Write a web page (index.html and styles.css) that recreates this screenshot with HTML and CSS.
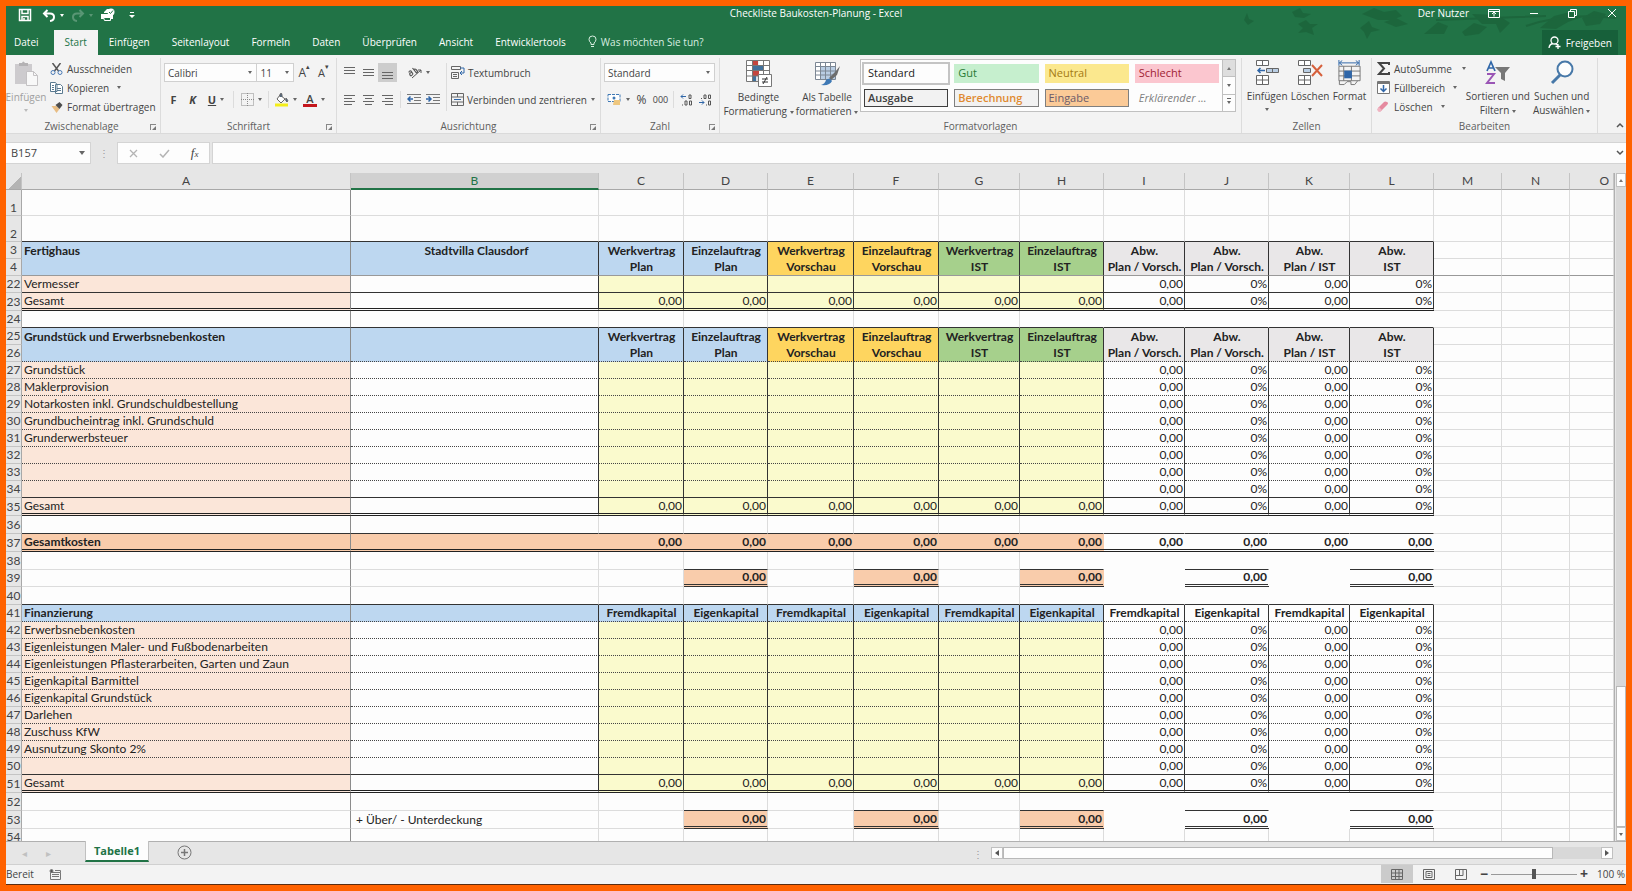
FILE: index.html
```html
<!DOCTYPE html>
<html lang="de">
  <head>
    <meta charset="UTF-8">
    <meta name="viewport" content="width=device-width, initial-scale=1.0">
    <title>Checkliste Baukosten-Planung - Excel</title>
    <link rel="stylesheet" href="styles.css">
  </head>
  <body>
    <header class="top">
      <!-- Leaf pattern behind the window buttons -->
      <svg class="leaves" width="400" height="49" viewBox="0 0 400 49" fill="#1a5e37">
        <path d="M18 14l3-7 2 6 5 2-6 4zM66 6l8-4 3 5 8 1-7 4-9-1zM72 18l8-4 4 4 8 0-6 4 2 7-8-3-8 1 5-5zM136 8l12-6 10 4 12-2 6 6-10 4-14 0zM134 22l9-7 3 6 8 3-9 2-4 7-3-7zM158 16l12-4 12 6-12 3zM198 28l14-12 10 4-4 8zM236 26l12-9 13 4-8 7-14 2zM246 8l10 10 14 0 4 9 10-10-12-8zM314 22l14-12 16-4 12 5-14 5-12 7zM356 12l12-7 12 3-6 10-14 2z"/>
        <path d="M210 14q60-2 110-4M300 20q40-14 90-8" stroke="#1a5e37" stroke-width="2" fill="none"/>
      </svg>
      <div class="titlebar">
        <div class="quick">
          <button type="button" aria-label="Speichern"><svg width="14" height="14" viewBox="0 0 14 14" fill="none" stroke="#fff" stroke-width="1.5"><path d="M1.5 1.5h11v11h-11zM4 1.5v4h6v-4M4 12.5v-4h6v4M6 10v2"/></svg></button>
          <button type="button" aria-label="Rückgängig"><svg width="14" height="13" viewBox="0 0 14 13" fill="none" stroke="#fff" stroke-width="2"><path d="M5.500 1L2 4.500 5.500 8M2 4.500h6q4 0 4 3.500t-4 4"/></svg><i class="caret light"></i></button>
          <button type="button" class="faded" aria-label="Wiederholen"><svg width="14" height="13" viewBox="0 0 14 13" fill="none" stroke="#fff" stroke-width="2"><path d="M8.500 1L12 4.500 8.500 8M12 4.500H6q-4 0-4 3.500t4 4"/></svg><i class="caret light"></i></button>
          <button type="button" aria-label="Schnelldruck"><svg width="15" height="14" viewBox="0 0 15 14"><path d="M4 4l3-3h3v4H4zM1 6h12v5H1z" fill="#fff"/><path d="M3.500 9.500h7v3h-6z" fill="#217346" stroke="#fff"/><circle cx="11" cy="4" r="3.500" fill="#fff"/><path d="M9 4l1.500 1.500L13 2.500" stroke="#217346" fill="none"/></svg></button>
          <button type="button" aria-label="Symbolleiste anpassen"><svg width="6" height="8" viewBox="0 0 6 8" fill="#fff"><path d="M1 1h4v1H1zM0 4h6L3 7z"/></svg></button>
        </div>
        <div class="doc-title">Checkliste Baukosten-Planung - Excel</div>
        <div class="window-buttons">
          <span class="user">Der Nutzer</span>
          <button type="button" aria-label="Menüband-Anzeige"><svg width="12" height="9" viewBox="0 0 12 9" fill="none" stroke="#fff"><path d="M.5.5h11v8H.5zM.5 2.500h11M6 7.500v-4M4 5l2-2 2 2"/></svg></button>
          <button type="button" aria-label="Minimieren"><svg width="10" height="9" viewBox="0 0 10 9" stroke="#fff"><path d="M1 4.500h8"/></svg></button>
          <button type="button" aria-label="Verkleinern"><svg width="10" height="9" viewBox="0 0 10 9" fill="none" stroke="#fff"><path d="M.5 2.500h6v6h-6zM2.500 2.500v-2h6v6h-2"/></svg></button>
          <button type="button" aria-label="Schließen"><svg width="10" height="10" viewBox="0 0 10 10" stroke="#fff"><path d="M1 1l8 8M9 1L1 9"/></svg></button>
        </div>
      </div>
      <nav class="tabs">
        <button type="button" class="file">Datei</button>
        <button type="button" class="active">Start</button>
        <button type="button">Einfügen</button>
        <button type="button">Seitenlayout</button>
        <button type="button">Formeln</button>
        <button type="button">Daten</button>
        <button type="button">Überprüfen</button>
        <button type="button">Ansicht</button>
        <button type="button">Entwicklertools</button>
        <button type="button" class="tell-me"><svg width="9" height="13" viewBox="0 0 9 13" fill="none" stroke="#d8eee0"><path d="M3 9.500V8Q1 6.500 1 4.200 1 1 4.500 1T8 4.200Q8 6.500 6 8v1.500zM3 11.500h3"/></svg>Was möchten Sie tun?</button>
        <button type="button" class="share"><svg width="14" height="13" viewBox="0 0 14 13" fill="none" stroke="#fff" stroke-width="1.300"><circle cx="6.500" cy="4.500" r="3.500"/><path d="M1 12q.5-4 4-4.500M7.500 7.500l2 1.500M7.500 10.500h5M10 8v5"/></svg>Freigeben</button>
      </nav>
    </header>

    <section class="ribbon">
      <div class="group clipboard">
        <div class="body">
          <button type="button" class="big paste"><svg width="26" height="27" viewBox="0 0 26 27"><path d="M2 4h17v20H2z" fill="#cdcbce"/><path d="M6 6V3h3q1-3 3 0h3v3z" fill="#b4b2b4"/><path d="M13.500 11.500h7l4 4v10h-11z" fill="#f8f8f8" stroke="#c4c2c4"/><path d="M20.500 11.500v4h4" fill="none" stroke="#c4c2c4"/></svg><span>Einfügen</span><i class="caret"></i></button>
          <div class="stack">
            <button type="button"><svg width="12" height="12" viewBox="0 0 12 12" fill="none"><path d="M2 0l6 8M10 0L4 8" stroke="#555" stroke-width="1.500"/><circle cx="2.500" cy="9.500" r="2" stroke="#4a7ab5"/><circle cx="9.500" cy="9.500" r="2" stroke="#4a7ab5"/></svg>Ausschneiden</button>
            <button type="button"><svg width="13" height="12" viewBox="0 0 13 12" fill="#fff" stroke="#5a7a90"><path d="M.5.5h5l1.500 2v7H.5zM5.500 2.500h5l2 2v7h-7z"/><path d="M2 3.500h2M2 5.500h2M2 7.500h2M7 6.500h4M7 8.500h4"/></svg>Kopieren<i class="caret"></i></button>
            <button type="button"><svg width="12" height="12" viewBox="0 0 12 12"><path d="M1 5l5 0 3 3-3 4z" fill="#e8bd84"/><path d="M5 4l4-3 3 3-3 4z" fill="#4c4c4c"/></svg>Format übertragen</button>
          </div>
        </div>
        <div class="caption">Zwischenablage<i class="launcher"></i></div>
      </div>

      <div class="group font">
        <div class="body rows">
          <div class="row">
            <select class="font-name" aria-label="Schriftart"><option>Calibri</option></select><select class="font-size" aria-label="Schriftgrad"><option>11</option></select>
            <button type="button" class="tool grow" aria-label="Vergrößern">A<sup>▴</sup></button>
            <button type="button" class="tool shrink" aria-label="Verkleinern">A<sup>▾</sup></button>
          </div>
          <div class="row">
            <button type="button" class="tool"><b>F</b></button>
            <button type="button" class="tool"><b><em>K</em></b></button>
            <button type="button" class="tool with-caret"><b><u>U</u></b><i class="caret"></i></button>
            <i class="split"></i>
            <button type="button" class="tool with-caret" aria-label="Rahmen"><svg width="13" height="13" viewBox="0 0 13 13" fill="none" stroke="#8a8a8a" stroke-dasharray="1 1"><path d="M.5.5h12v12H.5zM6.500 0v13M0 6.500h13"/></svg><i class="caret"></i></button>
            <i class="split"></i>
            <button type="button" class="tool with-caret" aria-label="Füllfarbe"><svg width="14" height="14" viewBox="0 0 14 14"><path d="M5 2l5 4-4 4-4-4z" fill="#fff" stroke="#666"/><path d="M5 4V1q2-2 2 1v2M11 5q3 3 1 4-2-1-1-4" fill="#4a6a8a" stroke="#666"/><path d="M0 10.500h13v3H0z" fill="#f4ee1a"/></svg><i class="caret"></i></button>
            <button type="button" class="tool with-caret font-color" aria-label="Schriftfarbe"><span>A</span><i class="caret"></i></button>
          </div>
        </div>
        <div class="caption">Schriftart<i class="launcher"></i></div>
      </div>

      <div class="group align">
        <div class="body">
          <div class="rows">
            <div class="row">
              <button type="button" class="tool" aria-label="Oben"><svg width="13" height="12" viewBox="0 0 13 12" stroke="#666"><path d="M1 .5h11M1 3.500h11M1 6.500h11"/></svg></button>
              <button type="button" class="tool" aria-label="Mitte"><svg width="13" height="12" viewBox="0 0 13 12" stroke="#666"><path d="M1 2.500h11M1 5.500h11M1 8.500h11"/></svg></button>
              <button type="button" class="tool pressed" aria-label="Unten"><svg width="13" height="12" viewBox="0 0 13 12" stroke="#666"><path d="M1 5.500h11M1 8.500h11M1 11.500h11"/></svg></button>
              <button type="button" class="tool with-caret rotate" aria-label="Ausrichtung"><svg width="14" height="12" viewBox="0 0 14 12" fill="none" stroke="#555"><path d="M4 11l9-8M10 3h3v3"/><path d="M1 5.500q0-2 2-1.500l2 3M3.500 5.500Q1 6 2 8t3-1M4.500 1l4 5q2-1 0-3t-2.500 0" stroke-width="1.200"/></svg><i class="caret"></i></button>
            </div>
            <div class="row">
              <button type="button" class="tool" aria-label="Linksbündig"><svg width="13" height="10" viewBox="0 0 13 10" stroke="#666"><path d="M1 .5h11M1 3.500h8M1 6.500h11M1 9.500h8"/></svg></button>
              <button type="button" class="tool" aria-label="Zentriert"><svg width="13" height="10" viewBox="0 0 13 10" stroke="#666"><path d="M1 .5h11M3 3.500h7M1 6.500h11M3 9.500h7"/></svg></button>
              <button type="button" class="tool" aria-label="Rechtsbündig"><svg width="13" height="10" viewBox="0 0 13 10" stroke="#666"><path d="M1 .5h11M4 3.500h8M1 6.500h11M4 9.500h8"/></svg></button>
              <i class="split"></i>
              <button type="button" class="tool" aria-label="Einzug verkleinern"><svg width="14" height="11" viewBox="0 0 14 11"><path d="M0 .5h14M7 3.500h7M7 6.500h7M0 9.500h14" stroke="#777"/><path d="M6 5H2M3.500 2.500L1 5l2.500 2.500" stroke="#2f66a8" stroke-width="1.500" fill="none"/></svg></button>
              <button type="button" class="tool" aria-label="Einzug vergrößern"><svg width="14" height="11" viewBox="0 0 14 11"><path d="M0 .5h14M7 3.500h7M7 6.500h7M0 9.500h14" stroke="#777"/><path d="M0 5h4M2.500 2.500L5 5 2.500 7.500" stroke="#2f66a8" stroke-width="1.500" fill="none"/></svg></button>
            </div>
          </div>
          <i class="split tall"></i>
          <div class="rows wide">
            <div class="row"><button type="button" class="labelled"><svg width="14" height="13" viewBox="0 0 14 13" fill="none"><path d="M.5.5h9v3h-9zM.5 6.500h7v6h-7zM2 8.500h4M2 10.500h4" stroke="#666"/><path d="M9 2h4v5H9M11 5L9 7l2 2" stroke="#2f66a8"/></svg>Textumbruch</button></div>
            <div class="row"><button type="button" class="labelled merge"><svg width="13" height="13" viewBox="0 0 13 13" fill="none" stroke="#666"><path d="M.5.5h12v12H.5zM.5 4h12M.5 9h12M6.500.5V4M6.500 9v3.500"/><path d="M3 6.500h7" stroke="#2f66a8"/></svg>Verbinden und zentrieren<i class="caret"></i></button></div>
          </div>
        </div>
        <div class="caption">Ausrichtung<i class="launcher"></i></div>
      </div>

      <div class="group number">
        <div class="body rows">
          <div class="row"><select class="number-format" aria-label="Zahlenformat"><option>Standard</option></select></div>
          <div class="row">
            <button type="button" class="tool with-caret" aria-label="Buchhaltungszahlenformat"><svg width="15" height="13" viewBox="0 0 15 13"><path d="M1 1.500h12v7H1z" fill="#fff" stroke="#3f79b5" stroke-dasharray="3 1"/><circle cx="7" cy="5" r="1.500" fill="#3f79b5"/><path d="M7 7h6v5H6z" fill="#eec77f"/></svg><i class="caret"></i></button>
            <button type="button" class="tool percent">%</button>
            <button type="button" class="tool thousand">000</button>
            <i class="split"></i>
            <button type="button" class="tool decimals" aria-label="Dezimalstelle hinzufügen"><svg width="13" height="12" viewBox="0 0 13 12" fill="none"><path d="M6 2.500H1M3 .5l-2 2 2 2" stroke="#2f66a8"/><path d="M9 1h2v3.500H9zM5 7h2v4H5zM9.500 7h2v4h-2zM2 11h1" stroke="#555"/></svg></button>
            <button type="button" class="tool decimals" aria-label="Dezimalstelle löschen"><svg width="13" height="12" viewBox="0 0 13 12" fill="none"><path d="M5 1h2v3.500H5zM9.500 1h2v3.500h-2zM9.500 7h2v4h-2zM2 4.500h1M7 11h1" stroke="#555"/><path d="M0 8.500h5M3 6.500l2 2-2 2" stroke="#2f66a8"/></svg></button>
          </div>
        </div>
        <div class="caption">Zahl<i class="launcher"></i></div>
      </div>

      <div class="group styles">
        <div class="body">
          <button type="button" class="big cond"><svg width="26" height="27" viewBox="0 0 26 27"><path d="M.5.500h23v21H.5z" fill="#fff"/><path d="M6.500 1h6v20h-6z" fill="#dfe3e8"/><path d="M6 1h6v5H6z" fill="#c4453f"/><path d="M6 6h11v5H6z" fill="#41719c"/><path d="M6 11h7v5H6z" fill="#c4453f"/><path d="M6 16h4v5H6z" fill="#41719c"/><path d="M.5.500h23v21H.5zM.5 5.500h23M.5 10.500h23M.5 16h12M6.500.5v21M17.500.5v14" fill="none" stroke="#777"/><path d="M12.500 14.500h13v12h-13z" fill="#fff" stroke="#777"/><path d="M16 19h6M16 22h6M21 17l-4 7" stroke="#333" fill="none"/></svg><span>Bedingte</span><span>Formatierung <i class="caret"></i></span></button>
          <button type="button" class="big as-table"><svg width="27" height="27" viewBox="0 0 27 27"><path d="M1.500 2.500h20v17h-20z" fill="#fff"/><path d="M6 7h15v12H6z" fill="#b9cde3"/><path d="M1.500 2.500h20v17h-20zM1.500 6.500h20M1.500 11h20M1.500 15h20M6.500 2.500v17M11.500 2.500v17M16.500 2.500v17" fill="none" stroke="#7c8794"/><path d="M26 6l-3 9-6 5-2-2 6-6z" fill="#6d6d6d"/><path d="M7 25q4-1 5-5 4-3 6 1-2 5-11 4z" fill="#3f79b5"/></svg><span>Als Tabelle</span><span>formatieren <i class="caret"></i></span></button>
          <div class="gallery">
            <div class="swatches">
              <button type="button" class="standard">Standard</button>
              <button type="button" class="good">Gut</button>
              <button type="button" class="neutral">Neutral</button>
              <button type="button" class="bad">Schlecht</button>
              <button type="button" class="output">Ausgabe</button>
              <button type="button" class="calc">Berechnung</button>
              <button type="button" class="input">Eingabe</button>
              <button type="button" class="note">Erklärender ...</button>
            </div>
            <div class="gallery-scroll">
              <button type="button" class="off" aria-label="Nach oben"><i class="caret up"></i></button>
              <button type="button" aria-label="Nach unten"><i class="caret"></i></button>
              <button type="button" aria-label="Weitere"><i class="caret more"></i></button>
            </div>
          </div>
        </div>
        <div class="caption">Formatvorlagen</div>
      </div>

      <div class="group cells">
        <div class="body">
          <button type="button" class="big"><svg width="24" height="26" viewBox="0 0 24 26" fill="#fff" stroke="#666"><path d="M1.500.5h12v5h-12zM7.500.5v5M1.500 15.500h12v9h-12zM7.500 15.500v9M1.500 20h12"/><path d="M11.500 8.500h12v4h-12zM17.500 8.500v4" fill="#b9cde3"/><path d="M10 10.500H3M5.500 8L3 10.500 5.500 13" stroke="#2f66a8" stroke-width="1.500" fill="none"/></svg><span>Einfügen</span><i class="caret"></i></button>
          <button type="button" class="big"><svg width="26" height="26" viewBox="0 0 26 26" fill="#fff" stroke="#666"><path d="M1.500.5h12v5h-12zM7.500.5v5M1.500 15.500h12v9h-12zM7.500 15.500v9M1.500 20h12"/><path d="M6.500 8.500h7v4h-7z" fill="#b9cde3"/><path d="M15 5l10 11M25 5L15 16" stroke="#d6603c" stroke-width="2"/></svg><span>Löschen</span><i class="caret"></i></button>
          <button type="button" class="big"><svg width="25" height="26" viewBox="0 0 25 27" fill="none"><path d="M2 3h20M5 .5L2 3l3 2.500M19 .5L22 3l-3 2.500M1.500 0v6M22.500 0v6" stroke="#2f66a8"/><path d="M1.500 6.500h22v15h-22zM1.500 11.500h22M1.500 16.500h22M6.500 6.500v15M14.500 6.500v15M2 21.500v4h5l3-3h4v3h4l3-4" stroke="#777"/><path d="M7 11h8v8H7z" fill="#2f66a8"/></svg><span>Format</span><i class="caret"></i></button>
        </div>
        <div class="caption">Zellen</div>
      </div>

      <div class="group edit">
        <div class="body">
          <div class="stack">
            <button type="button"><svg width="13" height="13" viewBox="0 0 13 13" fill="none" stroke="#444" stroke-width="2"><path d="M12 3V1H2l5 5.500L2 12h10v-2"/></svg>AutoSumme<i class="caret far"></i></button>
            <button type="button"><svg width="13" height="13" viewBox="0 0 13 13" fill="#fff"><path d="M.5.500h12v12H.5z" stroke="#777"/><path d="M1 1h11v2H1z" fill="#777"/><path d="M6.500 4v6M3.500 7.500l3 3 3-3" fill="none" stroke="#2f66a8" stroke-width="1.500"/></svg>Füllbereich<i class="caret"></i></button>
            <button type="button"><svg width="13" height="13" viewBox="0 0 13 13"><path d="M1 8l6-6q1-1 3 0 2 1 0 3l-6 6q-1 1-3 0-1-1 0-3z" fill="#e58a9f"/><path d="M1 8q-1 2 0 3t3 0l1-1-3-3z" fill="#f0b4c2"/></svg>Löschen<i class="caret"></i></button>
          </div>
          <button type="button" class="big sort"><svg width="26" height="26" viewBox="0 0 26 26" fill="none"><path d="M2 11L6 2l4 9M3.500 8h5" stroke="#2f66a8" stroke-width="1.700"/><path d="M2 14h7L2 23h8" stroke="#9a55b5" stroke-width="2"/><path d="M10 7h15l-5 6v8l-4-2v-6z" fill="#777"/></svg><span>Sortieren und</span><span>Filtern <i class="caret"></i></span></button>
          <button type="button" class="big find"><svg width="26" height="26" viewBox="0 0 26 26" fill="none" stroke="#4778a8"><circle cx="16" cy="9" r="7.500" stroke-width="2" fill="#fdfdfd"/><path d="M11 15l-8 8" stroke-width="3"/></svg><span>Suchen und</span><span>Auswählen <i class="caret"></i></span></button>
        </div>
        <div class="caption">Bearbeiten</div>
      </div>
      <button type="button" class="collapse" aria-label="Menüband reduzieren"><svg width="8" height="6" viewBox="0 0 8 6" fill="none" stroke="#555" stroke-width="1.500"><path d="M1 5l3-3 3 3"/></svg></button>
    </section>

    <section class="formula-bar">
      <div class="name-box"><input type="text" value="B157" aria-label="Namenfeld"><i class="caret big-caret"></i></div>
      <span class="dots">⋮</span>
      <div class="fx">
        <svg width="9" height="9" viewBox="0 0 9 9" stroke="#b4b4b4" stroke-width="1.300"><path d="M1 1l7 7M8 1L1 8"/></svg>
        <svg width="11" height="9" viewBox="0 0 11 9" fill="none" stroke="#b4b4b4" stroke-width="1.500"><path d="M1 5l3 3 6-7"/></svg>
        <em>f<small>x</small></em>
      </div>
      <input type="text" class="formula" aria-label="Bearbeitungsleiste">
      <button type="button" class="expand" aria-label="Bearbeitungsleiste erweitern"><svg width="8" height="6" viewBox="0 0 8 6" fill="none" stroke="#555" stroke-width="1.500"><path d="M1 1l3 3 3-3"/></svg></button>
    </section>

    <main class="workbook">
      <div class="sheet">
        <table>
          <colgroup>
            <col class="w-head"><col class="w-a"><col class="w-b">
            <col class="w-m"><col class="w-l"><col class="w-xl"><col class="w-m"><col class="w-s"><col class="w-l">
            <col class="w-s"><col class="w-l"><col class="w-s"><col class="w-l">
            <col class="w-xs"><col class="w-xs"><col>
          </colgroup>
          <thead><tr id="letters"></tr></thead>
          <tbody id="grid"></tbody>
        </table>
      </div>
      <div class="vscroll">
        <button type="button" aria-label="Nach oben"><i class="caret up"></i></button>
        <div class="vtrack"><div class="vthumb"></div></div>
        <button type="button" aria-label="Nach unten"><i class="caret"></i></button>
      </div>
    </main>

    <div class="sheet-tabs">
      <span class="nav-arrow">◂</span><span class="nav-arrow">▸</span>
      <button type="button" class="sheet-tab">Tabelle1</button>
      <button type="button" class="add" aria-label="Neues Blatt"><svg width="15" height="15" viewBox="0 0 15 15" fill="none" stroke="#777"><circle cx="7.500" cy="7.500" r="6.500"/><path d="M7.500 4v7M4 7.500h7" stroke-width="1.500"/></svg></button>
      <div class="hscroll">
        <span class="dots">⋮</span>
        <button type="button" aria-label="Nach links"><i class="caret left"></i></button>
        <div class="htrack"><div class="hthumb"></div></div>
        <button type="button" aria-label="Nach rechts"><i class="caret right"></i></button>
      </div>
    </div>

    <footer class="status">
      <span>Bereit</span>
      <svg width="12" height="11" viewBox="0 0 12 11" fill="none" stroke="#777"><path d="M1.500 3.500h10v7h-10zM6 1.500h5.500v2M3 5.500h7M3 7.500h7"/><circle cx="2.500" cy="2" r="1.500" fill="#555"/></svg>
      <div class="views">
        <button type="button" class="on" aria-label="Normal"><svg width="12" height="11" viewBox="0 0 12 11" fill="none" stroke="#666"><path d="M.5.5h11v10H.5zM.5 4h11M.5 7.500h11M4.500.5v10M8 .5v10"/></svg></button>
        <button type="button" aria-label="Seitenlayout"><svg width="12" height="11" viewBox="0 0 12 11" fill="none" stroke="#666"><path d="M.5.5h11v10H.5zM3 2.500h6v6H3zM4.500 4.500h3M4.500 6.500h3"/></svg></button>
        <button type="button" aria-label="Umbruchvorschau"><svg width="12" height="11" viewBox="0 0 12 11" fill="none" stroke="#666"><path d="M.5.5h11v10H.5zM4.500.5v6M8 .5v6H.5"/></svg></button>
      </div>
      <button type="button" class="step" aria-label="Verkleinern">−</button>
      <input type="range" min="10" max="190" value="100" aria-label="Zoom">
      <button type="button" class="step" aria-label="Vergrößern">+</button>
      <span class="zoom">100 %</span>
    </footer>

    <script>
      const letters = 'ABCDEFGHIJKLMNO'.split('');
      const zero = '0,00';
      const rep = (v, n) => Array(n).fill(v);
      const diffs = [zero, '0%', zero, '0%'];
      const work = ['Werkvertrag', 'Einzelauftrag'];
      const capital = ['Fremdkapital', 'Eigenkapital'];
      const headTop = [...work, ...work, ...work, ...rep('Abw.', 4)];
      const headSub = ['Plan', 'Plan', 'Vorschau', 'Vorschau', 'IST', 'IST', 'Plan / Vorsch.', 'Plan / Vorsch.', 'Plan / IST', 'IST'];
      const pairs = ['', zero, '', zero, '', zero, '', zero, '', zero];

      const item = (n, text, extra = '') => [n, 'item ' + extra, text, '', ...rep('', 6), ...diffs];
      const total = (n) => [n, 'item total', 'Gesamt', '', ...rep(zero, 6), ...diffs];

      // number, row class, then the cells from column A on
      const rows = [
        [1, 'blank high'],
        [2, 'blank high before-head'],
        [3, 'head', 'Fertighaus', 'Stadtvilla Clausdorf', ...headTop],
        [4, 'head frozen', '', '', ...headSub],
        item(22, 'Vermesser', 'last'),
        total(23),
        [24, 'gap'],
        [25, 'head', 'Grundstück und Erwerbsnebenkosten', '', ...headTop],
        [26, 'head dotted', '', '', ...headSub],
        item(27, 'Grundstück'),
        item(28, 'Maklerprovision'),
        item(29, 'Notarkosten inkl. Grundschuldbestellung'),
        item(30, 'Grundbucheintrag inkl. Grundschuld'),
        item(31, 'Grunderwerbsteuer'),
        item(32, ''),
        item(33, ''),
        item(34, '', 'last'),
        total(35),
        [36, 'gap tall'],
        [37, 'sum tall', 'Gesamtkosten', '', ...rep(zero, 10)],
        [38, 'above-pairs tall'],
        [39, 'pairs', '', '', ...pairs],
        [40, 'gap tall'],
        [41, 'head dotted finance', 'Finanzierung', '', ...capital, ...capital, ...capital, ...capital, ...capital],
        item(42, 'Erwerbsnebenkosten'),
        item(43, 'Eigenleistungen Maler- und Fußbodenarbeiten'),
        item(44, 'Eigenleistungen Pflasterarbeiten, Garten und Zaun'),
        item(45, 'Eigenkapital Barmittel'),
        item(46, 'Eigenkapital Grundstück'),
        item(47, 'Darlehen'),
        item(48, 'Zuschuss KfW'),
        item(49, 'Ausnutzung Skonto 2%'),
        item(50, '', 'last'),
        total(51),
        [52, 'above-pairs tall'],
        [53, 'pairs tall', '', '+ Über/ - Unterdeckung', ...pairs],
        [54, 'blank']
      ];

      const letterRow = document.getElementById('letters');
      ['', ...letters].forEach(l => {
        const th = document.createElement('th');
        th.textContent = l;
        th.className = l ? 'col-' + l.toLowerCase() : 'corner';
        letterRow.appendChild(th);
      });

      const grid = document.getElementById('grid');
      rows.forEach(([number, cls, ...cells]) => {
        const tr = document.createElement('tr');
        tr.className = cls;
        const th = document.createElement('th');
        th.textContent = number;
        tr.appendChild(th);
        letters.forEach((l, i) => {
          const td = document.createElement('td');
          // c = amounts, d = deviations, x = outside the plan
          const zone = i < 1 ? 'a' : i < 2 ? 'b' : i < 8 ? 'c' : i < 12 ? 'd' : 'x';
          td.className = zone + ' col-' + l.toLowerCase();
          td.textContent = cells[i] || '';
          tr.appendChild(td);
        });
        grid.appendChild(tr);
      });
    </script>
  </body>
</html>
```

FILE: styles.css
```css
* {
  box-sizing: border-box;
}
body {
  margin: 0;
  height: 100vh;
  display: flex;
  flex-direction: column;
  overflow: hidden;
  border: 6px solid #ff6200;
  font-family: "Open Sans", "Noto Sans", sans-serif;
  font-size: 10px;
  line-height: 14px;
  color: #444;
  background: #e6e6e6;
}
button, input, select {
  font: inherit;
  color: inherit;
  margin: 0;
  padding: 0;
  border: none;
  background: none;
  border-radius: 0;
}
button {
  display: flex;
  align-items: center;
  justify-content: center;
  white-space: nowrap;
}
svg {
  flex: none;
}
/* Small drop-down arrow */
.caret {
  flex: none;
  display: inline-block;
  border: 2px solid transparent;
  border-top: 3px solid #666;
  border-bottom: none;
  vertical-align: middle;
}
.caret.light {
  border-top-color: #fff;
}
.caret.up {
  border-top: none;
  border-bottom: 3px solid #777;
}
.caret.left, .caret.right {
  border: 3px solid transparent;
  border-right: 4px solid #555;
  border-left: none;
}
.caret.right {
  border-right: none;
  border-left: 4px solid #555;
}
.caret.big-caret {
  border-width: 4px 3px 0;
}

/* Title bar and tabs */
.top {
  position: relative;
  flex: none;
  background: #217346;
  color: #fff;
}
.leaves {
  position: absolute;
  top: 0;
  right: 0;
  opacity: 0.6;
}
.titlebar {
  position: relative;
  height: 24px;
  display: grid;
  grid-template-columns: 1fr auto 1fr;
  padding-bottom: 8px;
  align-items: start;
}
.quick {
  display: flex;
  align-items: center;
  gap: 7px;
  padding: 2px 0 0 12px;
}
.quick button {
  gap: 4px;
}
.quick .faded {
  opacity: 0.25;
}
.quick button:first-child {
  margin-right: 3px;
}
.quick button:last-child {
  margin-left: 7px;
}
.window-buttons {
  display: flex;
  justify-content: flex-end;
  align-items: center;
  gap: 29px;
  padding-right: 9px;
}
.user {
  margin-right: -10px;
}
.tabs {
  position: relative;
  height: 25px;
  display: flex;
  line-height: 16px;
}
.tabs button {
  padding: 0 11px 2px;
}
.tabs .file {
  padding: 0 15px 2px 8px;
}
.tabs .active {
  background: #f3f3f3;
  color: #217346;
}
.tabs .tell-me {
  gap: 4px;
  color: #d8eee0;
}
.tabs .share {
  margin-left: auto;
  margin-right: 8px;
  padding: 0 6px;
  gap: 4px;
  background: #17603a;
}

/* Ribbon */
.ribbon {
  flex: none;
  display: flex;
  height: 79px;
  background: #f3f3f3;
  border-bottom: 1px solid #dadada;
}
.group {
  flex: none;
  display: flex;
  flex-direction: column;
  margin: 3px 0 0;
  padding: 1px 3px 0;
  border-right: 1px solid #dcdcdc;
}
.group .body {
  flex: none;
  height: 60px;
  display: flex;
}
.caption {
  position: relative;
  text-align: center;
  line-height: 14px;
  color: #5e5e5e;
}
.launcher {
  position: absolute;
  right: 1px;
  top: 5px;
  width: 6px;
  height: 6px;
  border-top: 1px solid #888;
  border-left: 1px solid #888;
}
.launcher::after {
  content: "";
  position: absolute;
  right: 0;
  bottom: 0;
  border-left: 4px solid transparent;
  border-bottom: 4px solid #777;
}
.clipboard {
  width: 155px;
  padding-left: 0;
}
.font {
  width: 176px;
}
.align {
  width: 264px;
}
.number {
  width: 119px;
}
.styles {
  flex: 1 0 0;
}
.cells {
  width: 130px;
}
.edit {
  width: 226px;
}
.body .big {
  flex-direction: column;
  justify-content: flex-start;
  padding-top: 1px;
  line-height: 14px;
}
.big svg {
  margin-bottom: 3px;
}
.big > .caret {
  margin-top: 5px;
}
.big.paste {
  width: 40px;
  color: #a0a0a0;
}
.paste .caret {
  border-top-color: #bbb;
}
.stack {
  display: flex;
  flex-direction: column;
  padding-left: 4px;
}
.stack button {
  height: 19px;
  justify-content: flex-start;
  gap: 4px;
}
.stack .caret {
  margin-left: 4px;
}
.stack svg {
  width: 13px;
}
.rows, .group .rows.body {
  display: flex;
  flex-direction: column;
  gap: 8px;
  padding-top: 4px;
}
.row {
  height: 19px;
  display: flex;
  align-items: center;
}
.tool {
  width: 19px;
  height: 19px;
  font-size: 11px;
}
.tool.with-caret {
  width: 28px;
  gap: 4px;
}
.tool.pressed {
  background: #cdcdcd;
}
.tool.grow {
  width: 20px;
  font-size: 12px;
}
.tool sup {
  font-size: 7px;
  line-height: 7px;
  align-self: flex-start;
}
.split {
  flex: none;
  width: 1px;
  height: 17px;
  margin: 0 3px;
  background: #dcdcdc;
}
.split.tall {
  height: 48px;
  margin: 4px 4px 0;
}
select {
  appearance: none;
  height: 19px;
  padding-left: 3px;
  border: 1px solid #d0d0d0;
  background: #fdfdfd url("data:image/svg+xml,%3Csvg xmlns='http://www.w3.org/2000/svg' width='4' height='3'%3E%3Cpath d='M0 0h4L2 3z' fill='%23666'/%3E%3C/svg%3E") no-repeat right 4px center;
}
.font-name {
  width: 94px;
}
.font-size {
  width: 37px;
  border-left: none;
}
.font-color span {
  width: 14px;
  height: 14px;
  line-height: 11px;
  font-weight: 600;
  border-bottom: 3px solid #c4161c;
}
.rotate {
  margin-left: 8px;
}
.wide {
  flex: 1;
}
.labelled {
  gap: 3px;
}
.merge .caret {
  margin-left: 1px;
}
.number-format {
  width: 111px;
}
.percent {
  font-size: 12px;
}
.thousand {
  font-size: 9px;
}
.big.cond {
  width: 71px;
}
.big.as-table {
  width: 66px;
}
.gallery {
  flex: 1;
  display: flex;
  height: 53px;
  margin-right: 2px;
  border: 1px solid #c0c0c0;
  background: #fdfdfd;
}
.swatches {
  flex: 1;
  display: grid;
  grid-template-columns: repeat(4, 1fr);
  gap: 6px;
  padding: 4px 3px;
  font-size: 11px;
}
.swatches button {
  justify-content: flex-start;
  padding-left: 3px;
  border: 1px solid transparent;
}
.swatches .standard {
  color: #222;
  outline: 2px solid #c4c4c4;
}
.swatches .good {
  background: #c6efce;
  color: #2a7a35;
}
.swatches .neutral {
  background: #fbe88e;
  color: #a37a12;
}
.swatches .bad {
  background: #fbc6cf;
  color: #a01c33;
}
.swatches .output {
  background: #f2f2f2;
  border-color: #3f3f3f;
  color: #3f3f3f;
  font-weight: 600;
}
.swatches .calc {
  background: #f2f2f2;
  border-color: #7f7f7f;
  color: #e08a30;
  font-weight: 600;
}
.swatches .input {
  background: #fbca97;
  border-color: #7f7f7f;
  color: #6b5a6a;
}
.swatches .note {
  color: #7f7f7f;
  font-style: italic;
}
.gallery-scroll {
  width: 13px;
  display: flex;
  flex-direction: column;
  border-left: 1px solid #c0c0c0;
}
.gallery-scroll button {
  flex: 1;
  border-bottom: 1px solid #c0c0c0;
}
.gallery-scroll button:last-child {
  border-bottom: none;
}
.gallery-scroll .off {
  background: #dedede;
}
.caret.more {
  position: relative;
}
.caret.more::before {
  content: "";
  position: absolute;
  left: -2px;
  top: -6px;
  width: 4px;
  height: 1px;
  background: #666;
}
.cells .body {
  justify-content: space-around;
}
.edit .stack {
  padding-left: 2px;
}
.edit .caret.far {
  margin-left: 6px;
}
.edit .body .sort {
  margin-left: auto;
}
.edit .body .find {
  margin: 0 7px 0 3px;
}
.collapse {
  width: 28px;
  align-self: flex-end;
  justify-content: flex-end;
  padding: 0 2px 5px 0;
}

/* Formula bar */
.formula-bar {
  flex: none;
  display: flex;
  align-items: center;
  height: 39px;
  padding-bottom: 1px;
}
.name-box {
  width: 85px;
  height: 22px;
  display: flex;
  align-items: center;
  padding: 0 5px;
  background: #fdfdfd;
  border: 1px solid #d4d4d4;
  border-left: none;
  font-size: 11px;
}
.name-box input {
  flex: 1;
  min-width: 0;
}
.dots {
  width: 26px;
  text-align: center;
  color: #999;
}
.fx {
  width: 93px;
  height: 22px;
  display: flex;
  align-items: center;
  justify-content: space-around;
  background: #fdfdfd;
  border: 1px solid #d4d4d4;
}
.fx em {
  font-family: "Liberation Serif", serif;
  font-size: 13px;
}
.fx small {
  font-size: 9px;
}
.formula {
  flex: 1;
  height: 22px;
  margin-left: 2px;
  background: #fdfdfd;
  border: 1px solid #d4d4d4;
  border-right: none;
}
.expand {
  width: 12px;
  height: 22px;
  background: #fdfdfd;
  border: solid #d4d4d4;
  border-width: 1px 0;
}

/* Sheet */
.workbook {
  flex: 1;
  min-height: 0;
  display: flex;
}
.sheet {
  flex: 1;
  overflow: hidden;
  background: #fdfdfd;
  border-right: 1px solid #b0b0b0;
}
table {
  width: 100%;
  table-layout: fixed;
  border-collapse: separate;
  border-spacing: 0;
  font-family: Lato, sans-serif;
  font-size: 12px;
  line-height: 14px;
  color: #222;
}
.w-head { width: 16px; }
.w-a { width: 329px; }
.w-b { width: 248px; }
.w-xl { width: 86px; }
.w-m { width: 85px; }
.w-l { width: 84px; }
.w-s { width: 81px; }
.w-xs { width: 68px; }
th, td {
  height: 17px;
  padding: 0 1px 0 2px;
  overflow: hidden;
  white-space: nowrap;
  vertical-align: middle;
  text-align: right;
  border-right: 1px solid #dcdcdc;
  border-bottom: 1px solid #dcdcdc;
}
th {
  padding: 0;
  background: #e6e6e6;
  border-color: #c4c4c4;
  font-weight: 400;
  text-align: center;
  color: #444;
}
tbody th {
  border-right-color: #a8a8a8;
}
thead th {
  border-bottom-color: #a8a8a8;
}
thead .col-b {
  background: #d0d0d0;
  border-bottom: 2px solid #217346;
  color: #217346;
}
/* The last column runs on under the scroll bar */
thead .col-o {
  padding-right: 4px;
  text-align: right;
}
.corner {
  background: linear-gradient(135deg, #e6e6e6 60%, #b4b4b4 60%);
}
.high th, .high td {
  height: 26px;
  vertical-align: bottom;
}
.tall th, .tall td, .total th, .total td {
  height: 18px;
}
td.a, td.b {
  text-align: left;
}
td.a {
  border-right-color: #8c8c8c;
}
td.b {
  padding-left: 5px;
}
.before-head td:not(.x), .gap td:not(.x) {
  border-bottom-color: #333;
}
.gap .d, .gap .col-h, .above-pairs .d, .above-pairs .col-h, .pairs .d, .pairs .col-h {
  border-right-color: transparent;
}
/* Header rows */
.head td:not(.x) {
  text-align: center;
  font-weight: 700;
  border-bottom: none;
  background: #bdd7f0;
}
.head td.a {
  text-align: left;
}
.head .b, .head .c, .head .d, .item .b, .item .c, .item .d {
  border-right-color: #333;
}
.head td.col-e, .head td.col-f {
  background: #fed55f;
}
.head td.col-g, .head td.col-h {
  background: #a6d08c;
}
.head td.d {
  background: #e9e7e8;
}
.head.finance td.c {
  background: #bdd7f0;
}
.head.finance td.d {
  background: #fdfdfd;
}
.frozen td:not(.x), .frozen td.x {
  border-bottom: 1px solid #999;
}
.dotted td:not(.x) {
  border-bottom: 1px dotted #444;
}
/* Item rows */
.item td:not(.x) {
  border-bottom: 1px dotted #444;
}
.item td.a {
  background: #fbe6d9;
}
.item td.c {
  background: #fafacd;
}
.last td:not(.x) {
  border-bottom: 1px solid #333;
}
.total td:not(.x), .sum td:not(.x) {
  border-bottom: 3px double #222;
}
/* Sums */
.sum td, .pairs .c, .pairs .d {
  font-weight: 700;
}
.sum .b, .sum .c, .sum .d {
  padding-right: 2px;
  border-right: none;
}
.sum .a, .sum .b, .sum .c {
  background: #f9ccab;
}
.above-pairs .d, .pairs .d {
  border-bottom-color: transparent;
}
.above-pairs .col-d, .above-pairs .col-f, .above-pairs .col-h,
.above-pairs .col-j, .above-pairs .col-l {
  border-bottom-color: #333;
}
.pairs .col-d, .pairs .col-f, .pairs .col-h {
  background: #f9ccab;
}
.pairs .col-d, .pairs .col-f, .pairs .col-h, .pairs .col-j, .pairs .col-l {
  border-bottom: 3px double #333;
}

/* Scroll bars */
.vscroll {
  width: 11px;
  display: flex;
  flex-direction: column;
  padding-left: 1px;
}
.vscroll button {
  height: 14px;
  background: #fdfdfd;
  border: 1px solid #c0c0c0;
}
.vtrack {
  flex: 1;
  display: flex;
  flex-direction: column;
  justify-content: flex-end;
  background: #d8d8d8;
}
.vthumb {
  height: 22%;
  background: #fdfdfd;
  border: 1px solid #b8b8b8;
}
.sheet-tabs {
  flex: none;
  display: flex;
  height: 23px;
  border-top: 1px solid #b0b0b0;
}
.nav-arrow {
  width: 24px;
  padding: 4px 0 0 16px;
  color: #c0c0c0;
}
.sheet-tab {
  width: 64px;
  height: 21px;
  margin: -1px 28px 0 31px;
  background: #fdfdfd;
  border: 1px solid #c0c0c0;
  border-top: none;
  border-bottom: 2px solid #217346;
  color: #217346;
  font-size: 11px;
  font-weight: 700;
}
.add {
  height: 20px;
}
.hscroll {
  width: 40%;
  margin: 5px 13px 5px auto;
  display: flex;
}
.hscroll button {
  width: 12px;
  background: #fdfdfd;
  border: 1px solid #c0c0c0;
}
.htrack {
  flex: 1;
  background: #d8d8d8;
}
.hthumb {
  width: 92%;
  height: 100%;
  background: #fdfdfd;
  border: 1px solid #b8b8b8;
}

/* Status bar */
.status {
  flex: none;
  display: flex;
  align-items: center;
  height: 21px;
  padding-bottom: 1px;
  background: #f3f3f3;
  border-top: 1px solid #d0d0d0;
  border-bottom: 1px solid #5a2c10;
}
.status span + svg {
  margin-left: 15px;
}
.views {
  height: 100%;
  margin-left: auto;
  display: flex;
}
.views button {
  width: 32px;
}
.views .on {
  background: #cbcbcb;
}
.step {
  width: 14px;
  font-size: 14px;
  font-weight: 700;
}
input[type="range"] {
  appearance: none;
  width: 86px;
  height: 1px;
  background: #999;
}
input[type="range"]::-webkit-slider-thumb {
  appearance: none;
  width: 4px;
  height: 10px;
  background: #555;
}
.zoom {
  width: 35px;
  padding-right: 1px;
  text-align: right;
}
```
